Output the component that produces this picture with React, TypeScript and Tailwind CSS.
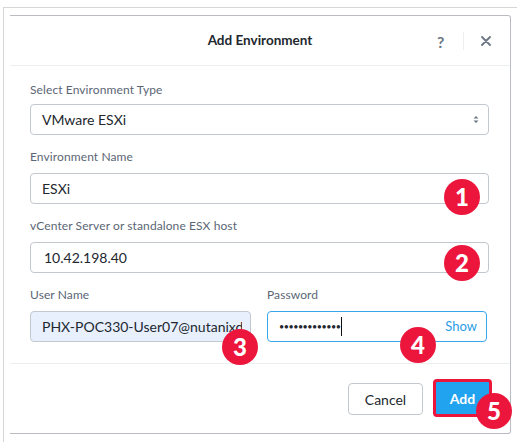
import React from "react"

const font = { fontFamily: "Lato, 'Open Sans', sans-serif" }

function Badge({ n, className }: { n: number; className: string }) {
  return (
    <div
      className={
        "absolute w-[36px] h-[36px] rounded-full bg-[#ec163d] text-white flex items-center justify-center text-[24px] font-black leading-none " +
        className
      }
    >
      {n}
    </div>
  )
}

function Field({ label, children, top }: { label: string; children: React.ReactNode; top: string }) {
  return (
    <div className={top}>
      <div className="h-[16px] text-[12px] leading-[16px] text-[#5b6675] tracking-[0.1px]">{label}</div>
      {children}
    </div>
  )
}

export default function App() {
  return (
    <div className="w-[517px] h-[442px] bg-white relative overflow-hidden" style={font}>
      <div className="ml-[3px] mt-[7px] border-l border-t border-[#d6d6d6] h-[440px] pt-[7px] pl-[6px]">
        <div className="w-[501px] h-[419px] border-t border-r border-b border-[#b9bcc1] rounded-tr-[3px] rounded-br-[3px] flex flex-col">
          {/* header */}
          <div className="relative h-[50px] border-b border-[#eceef0] flex items-center justify-center">
            <span className="text-[13.5px] font-bold text-[#22272e]">Add Environment</span>
            <span className="absolute left-[427px] top-[14px] text-[16px] font-bold text-[#6b7682]">?</span>
            <div className="absolute left-[453px] top-[16px] h-[18px] border-l border-[#eceef0]" />
            <svg className="absolute left-[471px] top-[20px]" width="10" height="10" viewBox="0 0 10 10">
              <path d="M1 1L9 9M9 1L1 9" stroke="#6b7682" strokeWidth="1.8" strokeLinecap="round" />
            </svg>
          </div>

          {/* body */}
          <div className="pl-[20px] pr-[21px] pb-[21px] border-b border-[#eceef0]">
            <Field label="Select Environment Type" top="mt-[16px]">
              <div className="mt-[6px] h-[31px] border border-[#c3c8cf] rounded-[4px] flex items-center justify-between pl-[11px] pr-[9px]">
                <span className="text-[14px] text-[#22272e]">VMware ESXi</span>
                <svg width="6" height="9" viewBox="0 0 6 9">
                  <path d="M0.5 3.5L3 1L5.5 3.5Z M0.5 5.5L3 8L5.5 5.5Z" fill="#6b7682" />
                </svg>
              </div>
            </Field>
            <Field label="Environment Name" top="mt-[14px]">
              <div className="mt-[8px] h-[31px] border border-[#c3c8cf] rounded-[4px] flex items-center pl-[11px]">
                <span className="text-[14px] text-[#22272e]">ESXi</span>
              </div>
            </Field>
            <Field label="vCenter Server or standalone ESX host" top="mt-[14px]">
              <div className="mt-[8px] h-[31px] border border-[#c3c8cf] rounded-[4px] flex items-center pl-[13px]">
                <span className="text-[14px] text-[#22272e]">10.42.198.40</span>
              </div>
            </Field>
            <div className="mt-[14px] flex gap-[16px]">
              <Field label="User Name" top="w-[221px]">
                <div className="mt-[8px] h-[31px] border border-[#c3c8cf] rounded-[4px] bg-[#e8f0fe] flex items-center pl-[11px] pr-[8px] overflow-hidden">
                  <span className="text-[14px] text-[#22272e] whitespace-nowrap overflow-hidden">PHX-POC330-User07@nutanixdc.local</span>
                </div>
              </Field>
              <Field label="Password" top="w-[220px]">
                <div className="mt-[8px] h-[31px] border border-[#3aa6ea] rounded-[4px] flex items-center pl-[11px] pr-[9px] justify-between">
                  <span className="flex items-center">
                    <span className="text-[9px] tracking-[-0.5px] text-[#22272e]">•••••••••••••</span>
                    <span className="ml-[1px] w-[1px] h-[19px] bg-[#111]" />
                  </span>
                  <span className="text-[13px] text-[#2a9de6]">Show</span>
                </div>
              </Field>
            </div>
          </div>

          {/* footer */}
          <div className="flex-1 flex justify-end items-start pt-[15px] pr-[18px] gap-[10px]">
            <button className="mt-[4px] w-[75px] h-[32px] border border-[#c3c8cf] rounded-[4px] bg-white text-[14px] text-[#22272e]">
              Cancel
            </button>
            <button className="w-[59px] h-[38px] border-[3px] border-[#ec163d] rounded-[4px] bg-[#22a3ef] text-[14px] font-bold text-white">
              Add
            </button>
          </div>
        </div>
      </div>

      <Badge n={1} className="left-[444px] top-[179px]" />
      <Badge n={2} className="left-[444px] top-[245px]" />
      <Badge n={3} className="left-[222px] top-[329px]" />
      <Badge n={4} className="left-[400px] top-[327px]" />
      <Badge n={5} className="left-[476px] top-[393px]" />
    </div>
  )
}
